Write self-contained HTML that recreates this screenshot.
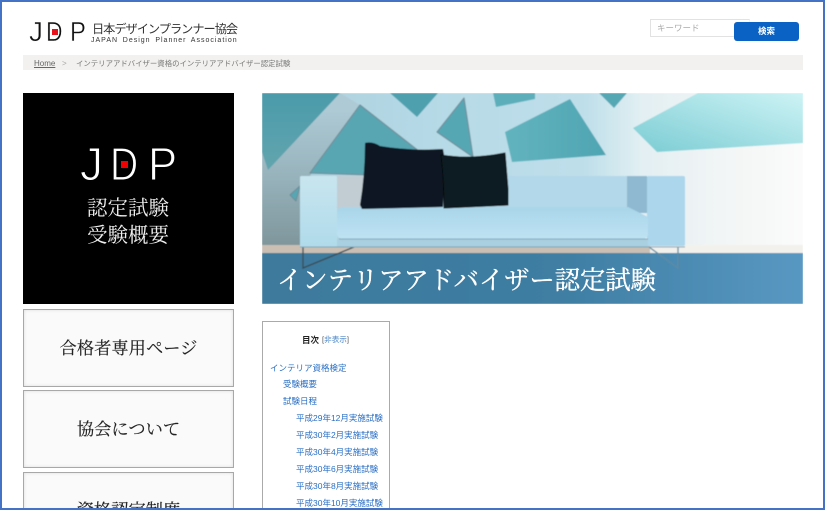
<!DOCTYPE html>
<html lang="ja"><head><meta charset="utf-8"><title>JDP</title>
<style>
html,body{margin:0;padding:0;background:#fff;overflow:hidden}
#p{position:relative;width:825px;height:510px;overflow:hidden;background:#fff;font-family:"Liberation Sans","Noto Sans CJK JP",sans-serif}
#p div,#p a{position:absolute;white-space:nowrap}
.s{font-family:"Liberation Serif","Noto Serif CJK SC",serif}
.nav{left:23px;width:209px;height:76px;border:1px solid #a8a8a8;background:#fafafa;box-shadow:inset 0 0 3px #ddd;text-align:center;color:#222;font-size:17.3px;line-height:76px;-webkit-text-stroke:.15px #222}
.t{color:#2a6fc4;font-size:8.5px;line-height:12px;text-decoration:none}
.frame{background:#4472c4;z-index:9}
.lh{font-size:28px;line-height:28px;color:#111;-webkit-text-stroke:.5px #fff;transform-origin:0 0}
.lb{font-size:46px;line-height:46px;color:#fff;-webkit-text-stroke:1.1px #000;transform-origin:0 0}
</style></head><body><div id="p">

<div class="lh" style="left:29px;top:18px">J</div>
<div class="lh" style="left:46px;top:18px;transform:scaleX(.82)">D</div>
<div class="lh" style="left:70px;top:18px;transform:scaleX(.85)">P</div>
<div style="left:52px;top:29px;width:6px;height:6px;background:#e8101a"></div>
<div style="left:92px;top:22px;font-size:12.2px;line-height:14px;letter-spacing:-1px;color:#333">日本デザインプランナー協会</div>
<div style="left:91px;top:36px;font-size:7px;line-height:9px;letter-spacing:1px;word-spacing:1.8px;color:#333">JAPAN Design Planner Association</div>

<div style="left:650px;top:19px;width:98px;height:16px;border:1px solid #e2e2e2;border-right-color:#f4f4f4"></div>
<div style="left:657px;top:23px;font-size:8.5px;line-height:11px;color:#aaa">キーワード</div>
<div style="left:734px;top:22px;width:65px;height:19px;background:#0a62c4;border-radius:3px;color:#fff;font-size:8.5px;font-weight:bold;line-height:19px;text-align:center">検索</div>

<div style="left:23px;top:55px;width:780px;height:15px;background:#f2f1ef"></div>
<a style="left:34px;top:58px;font-size:8px;line-height:11px;color:#666;text-decoration:underline">Home</a>
<div style="left:62px;top:58px;font-size:8px;line-height:11px;color:#aaa">&gt;</div>
<div style="left:76px;top:58px;font-size:7.4px;line-height:11px;color:#777">インテリアアドバイザー資格のインテリアアドバイザー認定試験</div>

<div style="left:23px;top:93px;width:211px;height:211px;background:#000"></div>
<div class="lb" style="left:80px;top:141px">J</div>
<div class="lb" style="left:110px;top:141px;transform:scaleX(.85)">D</div>
<div class="lb" style="left:148px;top:141px;transform:scaleX(.95)">P</div>
<div style="left:121px;top:161px;width:7px;height:7px;background:#f00000"></div>
<div class="s" style="left:87px;top:196px;font-size:20.5px;line-height:26px;color:#eee">認定試験</div>
<div class="s" style="left:87px;top:223px;font-size:20.5px;line-height:26px;color:#eee">受験概要</div>

<div class="nav s" style="top:309px;line-height:77px">合格者専用ページ</div>
<div class="nav s" style="top:390px;line-height:77px">協会について</div>
<div class="nav s" style="top:472px;height:37px;border-bottom:0;line-height:76px;overflow:hidden">資格認定制度</div>

<svg style="position:absolute;left:262px;top:93px" width="541" height="211" viewBox="262 93 541 211">
<defs>
<linearGradient id="w" x1="0" x2="1" y1="0" y2="0"><stop offset="0" stop-color="#adcedb"/><stop offset=".3" stop-color="#b5d9e6"/><stop offset=".6" stop-color="#bfdfea"/><stop offset=".7" stop-color="#e2eff3"/><stop offset=".85" stop-color="#f2f5f5"/><stop offset="1" stop-color="#fbfbfb"/></linearGradient>
<linearGradient id="lw" gradientUnits="userSpaceOnUse" x1="0" x2="0" y1="110" y2="245"><stop offset="0" stop-color="#adcad5"/><stop offset=".5" stop-color="#97b2bb"/><stop offset="1" stop-color="#7f969c"/></linearGradient>
<linearGradient id="tl" x1="0" x2="0" y1="0" y2="1"><stop offset="0" stop-color="#4b9bab"/><stop offset="1" stop-color="#62a5ae"/></linearGradient>
<linearGradient id="tr" x1="0" x2="1" y1="1" y2="0"><stop offset="0" stop-color="#7accd3"/><stop offset="1" stop-color="#cdf3f5"/></linearGradient>
<linearGradient id="tm" x1="0" x2="1" y1="0" y2="0"><stop offset="0" stop-color="#62b4be"/><stop offset="1" stop-color="#4fa5b3"/></linearGradient>
<linearGradient id="fl" x1="0" x2="1" y1="0" y2="0"><stop offset="0" stop-color="#3c7a9c"/><stop offset=".55" stop-color="#3f7ea3"/><stop offset="1" stop-color="#5898c2"/></linearGradient>
<linearGradient id="cu" x1="0" x2="0" y1="0" y2="1"><stop offset="0" stop-color="#a9d5e9"/><stop offset="1" stop-color="#bee3f3"/></linearGradient>
<linearGradient id="arm" x1="0" x2="0" y1="0" y2="1"><stop offset="0" stop-color="#c8e5ef"/><stop offset="1" stop-color="#b0dbea"/></linearGradient>
<filter id="b"><feGaussianBlur stdDeviation=".5"/></filter>
</defs>
<g filter="url(#b)">
<rect x="262" y="93" width="541" height="155" fill="url(#w)"/>
<polygon points="262,93 340,93 360,105 300,190 302,248 262,248" fill="url(#lw)"/>
<g stroke="#6f919c" stroke-width="1.2" stroke-linejoin="round">
<polygon points="262,93 340,93 268,170 262,152" fill="url(#tl)" stroke="none"/>
<polygon points="360,105 310,173 372,175 420,152" fill="#59a6b2"/>
<polygon points="390,93 438,93 417,117" fill="#4fa0ae" stroke="none"/>
<polygon points="464,98 473,157 437,132" fill="#55a7b4"/>
<polygon points="493,93 535,93 535,99 496,107" fill="#5cafba" stroke="none"/>
<polygon points="505,132 570,99 606,155 512,162" fill="url(#tm)" stroke="none"/>
<polygon points="599,93 627,93 614,108" fill="#55a7b4" stroke="none"/>
<polygon points="633,128 698,93 803,93 803,143 657,152" fill="url(#tr)" stroke="none"/>
<polygon points="290,195 300,186 296,201" fill="#55a7b4"/>
</g>
<rect x="262" y="245" width="541" height="9" fill="#cbbfb4"/>
<rect x="650" y="245" width="153" height="9" fill="#f3f1ec"/>
<rect x="262" y="253" width="541" height="51" fill="url(#fl)"/>
<polyline points="303,247 303,268 354,247" fill="none" stroke="#3a4a52" stroke-width="1.3"/>
<polyline points="649,247 678,268 678,247" fill="none" stroke="#5f8ba3" stroke-width="1.3"/>
<rect x="337" y="176" width="290" height="36" fill="#b2d8e9"/>
<rect x="337" y="176" width="27" height="35" fill="#c2cdd3"/>
<rect x="627" y="176" width="20" height="37" fill="#8fb9d0"/>
<rect x="300" y="176" width="37" height="71" rx="1.5" fill="url(#arm)"/>
<rect x="647" y="176" width="38" height="70" rx="1.5" fill="#acd6ec"/>
<rect x="337" y="239" width="311" height="8" fill="#a9d0e0"/>
<path d="M337 210 Q338 207 345 207 H628 L648 217 V234 Q648 239 640 239 H345 Q337 239 337 234Z" fill="url(#cu)"/>
<path d="M339 239 H648" stroke="#7fa9bd" stroke-width="1"/>
<path d="M300 247 H685" stroke="#82a3b1" stroke-width="1"/>
<path d="M365 143 Q372 141 380 146 Q410 151 443 149 L445 160 L443 207 L362 209 L360 205 Q365 175 365 143Z" fill="#0c1820"/>
<path d="M441 155 Q470 160 505 153 L508 190 L508 205 L444 208 Q444 180 441 155Z" fill="#0e1b24" stroke="#05090d" stroke-width="1"/>
</g>
<text x="277" y="289" font-size="25.3" fill="#fff" stroke="#fff" stroke-width=".35" style="font-family:'Liberation Serif','Noto Serif CJK SC',serif">インテリアアドバイザー認定試験</text>
</svg>

<div style="left:262px;top:321px;width:126px;height:188px;border:1px solid #aaa;border-bottom:0;background:#fff"></div>
<div style="left:302px;top:334px;font-size:8.5px;line-height:12px;font-weight:bold;color:#222">目次</div>
<div class="t" style="left:322px;top:334px;font-size:7.6px;color:#4a86c8"><span style="color:#555">[</span>非表示<span style="color:#555">]</span></div>
<a class="t" style="left:270px;top:362px">インテリア資格検定</a>
<a class="t" style="left:283px;top:378px">受験概要</a>
<a class="t" style="left:283px;top:395px">試験日程</a>
<a class="t" style="left:296px;top:412px">平成29年12月実施試験</a>
<a class="t" style="left:296px;top:429px">平成30年2月実施試験</a>
<a class="t" style="left:296px;top:446px">平成30年4月実施試験</a>
<a class="t" style="left:296px;top:463px">平成30年6月実施試験</a>
<a class="t" style="left:296px;top:480px">平成30年8月実施試験</a>
<a class="t" style="left:296px;top:497px">平成30年10月実施試験</a>

<div class="frame" style="left:0;top:0;width:825px;height:2px"></div>
<div class="frame" style="left:0;top:0;width:2px;height:510px"></div>
<div class="frame" style="right:0;top:0;width:2px;height:510px"></div>
<div class="frame" style="left:0;bottom:0;width:825px;height:2px"></div>
</div></body></html>
